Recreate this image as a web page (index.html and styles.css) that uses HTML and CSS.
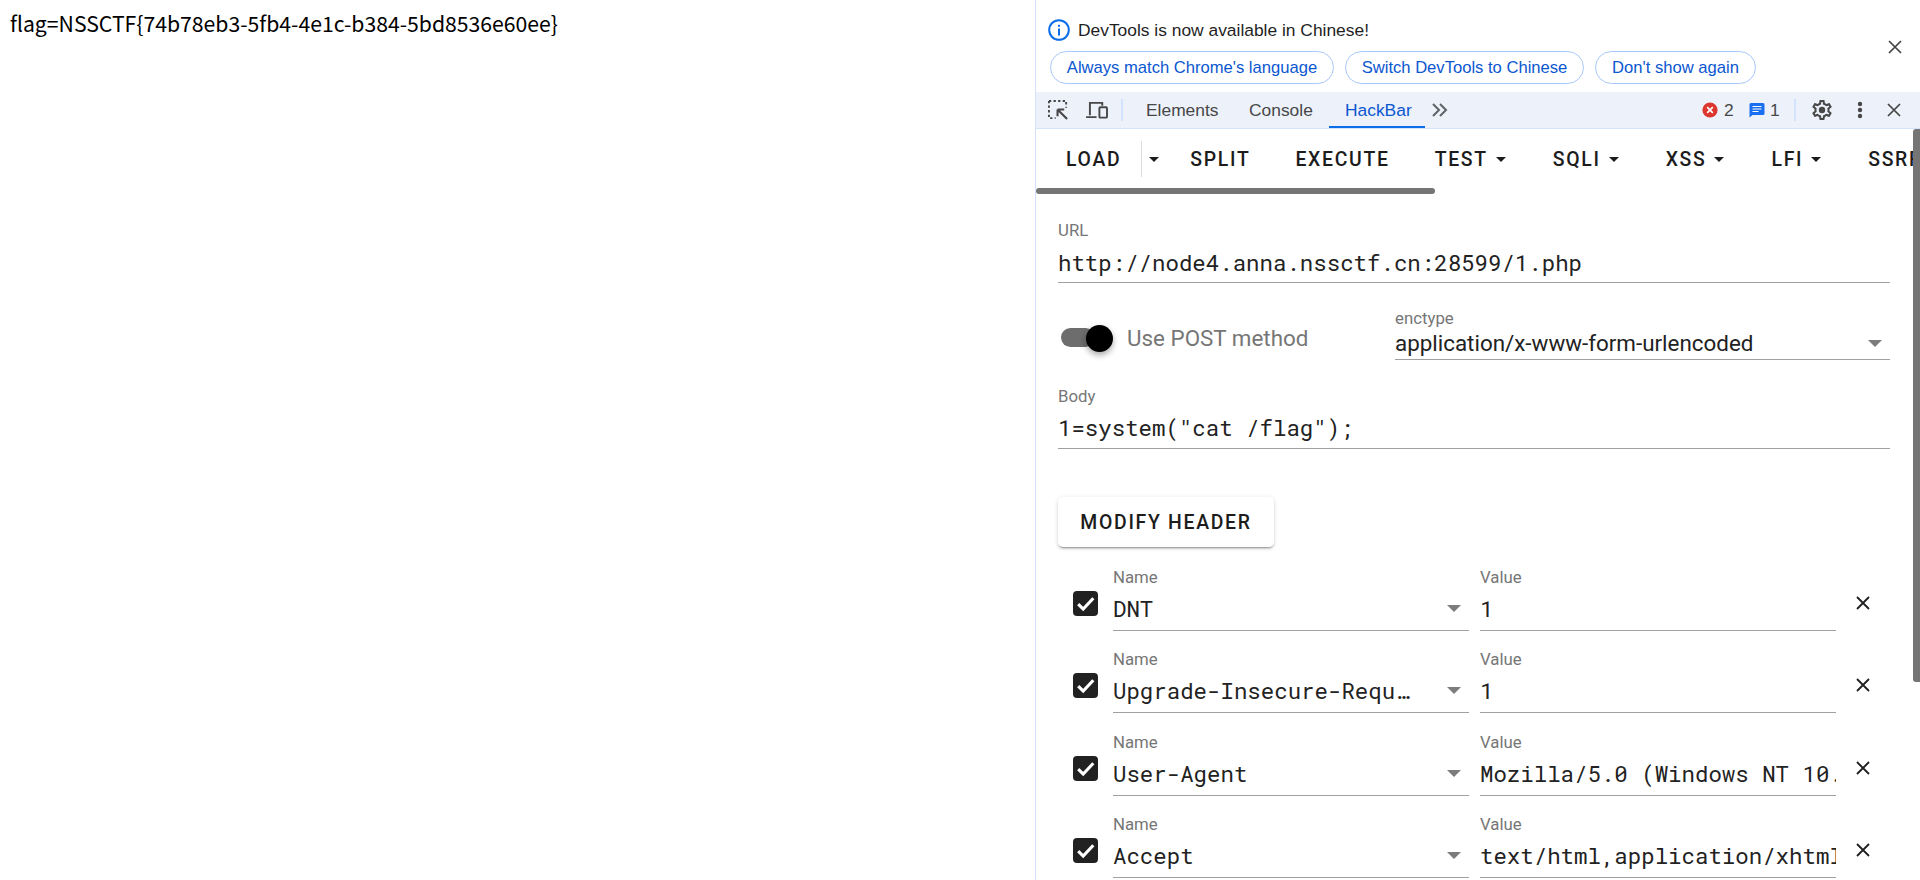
FILE: index.html
```html
<!DOCTYPE html>
<html lang="en">
<head>
<meta charset="utf-8">
<title>HackBar</title>
<link rel="stylesheet" href="styles.css">
</head>
<body>
<main class="page"><p class="flag">flag=NSSCTF{74b78eb3-5fb4-4e1c-b384-5bd8536e60ee}</p></main>
<aside class="devtools">
  <section class="infobar">
    <div class="info-line">
      <svg class="ico-info" viewBox="0 0 22 22"><circle cx="11" cy="11" r="9.8" fill="none" stroke="#0b6ee8" stroke-width="2"/><rect x="10" y="9.5" width="2" height="7" fill="#0b6ee8"/><rect x="10" y="5.8" width="2" height="2" fill="#0b6ee8"/></svg>
      <span>DevTools is now available in Chinese!</span>
    </div>
    <div class="info-actions">
      <button class="pill pill-a">Always match Chrome's language</button>
      <button class="pill pill-b">Switch DevTools to Chinese</button>
      <button class="pill pill-c">Don't show again</button>
    </div>
    <svg class="info-close" viewBox="0 0 14 14"><path d="M1 1l12 12M13 1L1 13" stroke="#444" stroke-width="1.7" fill="none"/></svg>
  </section>
  <nav class="tabs">
    <svg class="ti ti-inspect" viewBox="0 0 22 22"><path d="M1 1h18v7M1 1v18h7" fill="none" stroke="#474747" stroke-width="2" stroke-dasharray="2.4 2.4"/><path d="M10 10l10 10M10 10h7M10 10v7" fill="none" stroke="#474747" stroke-width="2.2"/></svg>
    <svg class="ti ti-device" viewBox="0 0 24 20"><path d="M4 15V2h13v3M0 17h11" fill="none" stroke="#474747" stroke-width="2"/><rect x="14" y="6.5" width="8" height="11" rx="1" fill="none" stroke="#474747" stroke-width="2"/></svg>
    <span class="sep sep-left"></span>
    <span class="tab tab-elements">Elements</span>
    <span class="tab tab-console">Console</span>
    <span class="tab tab-active">HackBar</span>
    <svg class="more" viewBox="0 0 18 14"><path d="M2 1l6 6-6 6M9 1l6 6-6 6" fill="none" stroke="#5f6368" stroke-width="2"/></svg>
    <span class="spacer"></span>
    <svg class="st-err" viewBox="0 0 16 16"><circle cx="8" cy="8" r="7.6" fill="#dc362e"/><path d="M5.2 5.2l5.6 5.6M10.8 5.2l-5.6 5.6" stroke="#fff" stroke-width="1.7"/></svg>
    <span class="count count-err">2</span>
    <svg class="st-msg" viewBox="0 0 16 16"><path d="M2 1h12a1.500 1.500 0 0 1 1.500 1.500v9A1.500 1.500 0 0 1 14 13H3.500L.5 15.500V2.500A1.500 1.500 0 0 1 2 1z" fill="#1a6ff0"/><path d="M3.500 4.500h9M3.500 7h9M3.500 9.500h6" stroke="#fff" stroke-width="1.200"/></svg>
    <span class="count count-msg">1</span>
    <span class="sep sep-right"></span>
    <svg class="ti-gear" viewBox="0 0 24 24"><path fill="#474747" d="M19.43 12.98c.04-.32.07-.64.07-.98 0-.34-.03-.66-.07-.98l2.11-1.65c.19-.15.24-.42.12-.64l-2-3.46c-.09-.16-.26-.25-.44-.25-.06 0-.12.01-.17.03l-2.49 1c-.52-.4-1.08-.73-1.69-.98l-.38-2.65C14.46 2.18 14.25 2 14 2h-4c-.25 0-.46.18-.49.42l-.38 2.65c-.61.25-1.17.59-1.69.98l-2.49-1c-.06-.02-.12-.03-.18-.03-.17 0-.34.09-.43.25l-2 3.46c-.13.22-.07.49.12.64l2.11 1.65c-.04.32-.07.65-.07.98 0 .33.03.66.07.98l-2.11 1.65c-.19.15-.24.42-.12.64l2 3.46c.09.16.26.25.44.25.06 0 .12-.01.17-.03l2.49-1c.52.4 1.08.73 1.69.98l.38 2.65c.03.24.24.42.49.42h4c.25 0 .46-.18.49-.42l.38-2.65c.61-.25 1.17-.59 1.69-.98l2.49 1c.06.02.12.03.18.03.17 0 .34-.09.43-.25l2-3.46c.12-.22.07-.49-.12-.64l-2.11-1.65zm-1.98-1.71c.04.31.05.52.05.73 0 .21-.02.43-.05.73l-.14 1.13.89.7 1.08.84-.7 1.21-1.27-.51-1.04-.42-.9.68c-.43.32-.84.56-1.25.73l-1.06.43-.16 1.13-.2 1.35h-1.4l-.19-1.35-.16-1.13-1.06-.43c-.43-.18-.83-.41-1.23-.71l-.91-.7-1.06.43-1.27.51-.7-1.21 1.08-.84.89-.7-.14-1.13c-.03-.31-.05-.54-.05-.74s.02-.43.05-.73l.14-1.13-.89-.7-1.08-.84.7-1.21 1.27.51 1.04.42.9-.68c.43-.32.84-.56 1.25-.73l1.06-.43.16-1.13.2-1.35h1.39l.19 1.35.16 1.13 1.06.43c.43.18.83.41 1.23.71l.91.7 1.06-.43 1.27-.51.7 1.21-1.07.85-.89.7.14 1.13z"/><circle cx="12" cy="12" r="3.200" fill="#474747"/></svg>
    <svg class="ti-dots" viewBox="0 0 6 18"><circle cx="3" cy="3" r="2.200" fill="#474747"/><circle cx="3" cy="9" r="2.200" fill="#474747"/><circle cx="3" cy="15" r="2.200" fill="#474747"/></svg>
    <svg class="ti-close" viewBox="0 0 14 14"><path d="M1 1l12 12M13 1L1 13" stroke="#444" stroke-width="1.700" fill="none"/></svg>
  </nav>
  <div class="hackbar">
    <div class="toolbar">
      <button class="tbtn">LOAD</button>
      <span class="tdiv"></span>
      <span class="caret caret-load"></span>
      <button class="tbtn">SPLIT</button>
      <button class="tbtn">EXECUTE</button>
      <button class="tbtn">TEST<span class="caret"></span></button>
      <button class="tbtn">SQLI<span class="caret"></span></button>
      <button class="tbtn">XSS<span class="caret"></span></button>
      <button class="tbtn">LFI<span class="caret"></span></button>
      <button class="tbtn">SSRF</button>
    </div>
    <div class="hthumb"></div>
    <form class="form">
      <div class="field field-url">
        <label class="lbl">URL</label>
        <div class="val mono">http://node4.anna.nssctf.cn:28599/1.php</div>
      </div>
      <div class="post-row">
        <div class="switch"><span class="track"></span><span class="knob"></span></div>
        <span class="post-label">Use POST method</span>
        <div class="field field-enc">
          <label class="lbl">enctype</label>
          <div class="val enc">application/x-www-form-urlencoded<span class="arrow"></span></div>
        </div>
      </div>
      <div class="field field-body">
        <label class="lbl">Body</label>
        <div class="val mono">1=system("cat /flag");</div>
      </div>
      <button type="button" class="modify">MODIFY HEADER</button>
      <div class="headers">
        <div class="hrow">
          <span class="cb"><svg viewBox="0 0 24 24"><path d="M5 12.500l4.800 4.800L19.500 7" fill="none" stroke="#fff" stroke-width="3"/></svg></span>
          <div class="field"><label class="lbl">Name</label><div class="val mono sel"><span class="clip">DNT</span><span class="arrow"></span></div></div>
          <div class="field"><label class="lbl">Value</label><div class="val mono"><span class="clip-raw">1</span></div></div>
          <svg class="del" viewBox="0 0 16 16"><path d="M2 2l12 12M14 2L2 14" stroke="#1f1f1f" stroke-width="1.800" fill="none"/></svg>
        </div>
        <div class="hrow">
          <span class="cb"><svg viewBox="0 0 24 24"><path d="M5 12.500l4.800 4.800L19.500 7" fill="none" stroke="#fff" stroke-width="3"/></svg></span>
          <div class="field"><label class="lbl">Name</label><div class="val mono sel"><span class="clip">Upgrade-Insecure-Requests</span><span class="arrow"></span></div></div>
          <div class="field"><label class="lbl">Value</label><div class="val mono"><span class="clip-raw">1</span></div></div>
          <svg class="del" viewBox="0 0 16 16"><path d="M2 2l12 12M14 2L2 14" stroke="#1f1f1f" stroke-width="1.800" fill="none"/></svg>
        </div>
        <div class="hrow">
          <span class="cb"><svg viewBox="0 0 24 24"><path d="M5 12.500l4.800 4.800L19.500 7" fill="none" stroke="#fff" stroke-width="3"/></svg></span>
          <div class="field"><label class="lbl">Name</label><div class="val mono sel"><span class="clip">User-Agent</span><span class="arrow"></span></div></div>
          <div class="field"><label class="lbl">Value</label><div class="val mono"><span class="clip-raw">Mozilla/5.0 (Windows NT 10.0; Win64; x64)</span></div></div>
          <svg class="del" viewBox="0 0 16 16"><path d="M2 2l12 12M14 2L2 14" stroke="#1f1f1f" stroke-width="1.800" fill="none"/></svg>
        </div>
        <div class="hrow">
          <span class="cb"><svg viewBox="0 0 24 24"><path d="M5 12.500l4.800 4.800L19.500 7" fill="none" stroke="#fff" stroke-width="3"/></svg></span>
          <div class="field"><label class="lbl">Name</label><div class="val mono sel"><span class="clip">Accept</span><span class="arrow"></span></div></div>
          <div class="field"><label class="lbl">Value</label><div class="val mono"><span class="clip-raw">text/html,application/xhtml+xml,application/xml</span></div></div>
          <svg class="del" viewBox="0 0 16 16"><path d="M2 2l12 12M14 2L2 14" stroke="#1f1f1f" stroke-width="1.800" fill="none"/></svg>
        </div>
      </div>
    </form>
    <div class="vthumb"></div>
  </div>
</aside>
</body>
</html>
```
FILE: styles.css
```css
* { box-sizing: border-box; }
html, body { margin: 0; height: 880px; overflow: hidden; background: #fff; }
body { display: flex; font-family: Roboto, "Liberation Sans", sans-serif; color: #1f1f1f; }
button { font: inherit; background: none; border: 0; padding: 0; color: inherit; }

.page { width: 1035px; flex: none; padding: 10px; }
.flag { margin: 0; font: 21.200px/26px "Noto Sans CJK SC", "Noto Sans", sans-serif; color: #000; }

.devtools { position: relative; width: 885px; flex: none; height: 880px; border-left: 1px solid #d3e3fd; display: flex; flex-direction: column; overflow: hidden; }

.infobar { position: relative; height: 92px; flex: none; padding: 18px 0 0 12px; font-family: "Liberation Sans", Arial, sans-serif; }
.info-line { display: flex; align-items: center; gap: 8px; height: 24px; font-size: 17.400px; color: #1f1f1f; }
.ico-info { width: 22px; height: 22px; flex: none; }
.info-actions { display: flex; gap: 11px; margin-top: 9px; padding-left: 2px; }
.pill { height: 33px; border: 1px solid #a8c7fa; border-radius: 17px; color: #0b57d0; font: 16.600px "Liberation Sans", Arial, sans-serif; background: #fff; padding: 0; }
.pill-a { width: 284px; }
.pill-b { width: 239px; }
.pill-c { width: 161px; }
.info-close { position: absolute; left: 852px; top: 40px; width: 14px; height: 14px; }

.tabs { height: 37px; flex: none; background: #ecf1fa; border-bottom: 1px solid #d3e3fd; display: flex; align-items: center; font: 17.400px "Liberation Sans", Arial, sans-serif; color: #474747; padding-left: 12px; }
.ti-inspect { width: 21px; height: 21px; flex: none; }
.ti-device { width: 23px; height: 19px; flex: none; margin-left: 17px; }
.sep { width: 2px; height: 22px; background: #d3e3fd; flex: none; }
.sep-left { margin-left: 12px; }
.tab { height: 36px; display: flex; align-items: center; flex: none; }
.tab-elements { margin-left: 23px; width: 103px; }
.tab-console { width: 80px; }
.tab-active { width: 96px; padding: 2px 0 0 16px; color: #0b57d0; border-bottom: 2px solid #0b6ee8; }
.more { width: 18px; height: 14px; margin-left: 6px; flex: none; }
.spacer { flex: 1; }
.st-err { width: 16px; height: 16px; flex: none; }
.count { margin-left: 6px; width: 21px; flex: none; }
.st-msg { width: 16px; height: 16px; flex: none; margin-left: 4px; }
.count-msg { margin-left: 5px; width: 18px; }
.sep-right { margin-left: 6px; }
.ti-gear { width: 24px; height: 24px; flex: none; margin-left: 14px; }
.ti-dots { width: 6px; height: 18px; flex: none; margin-left: 23px; }
.ti-close { width: 14px; height: 14px; flex: none; margin-left: 24px; margin-right: 19px; }

.hackbar { position: relative; flex: 1; overflow: hidden; }
.toolbar { display: flex; align-items: center; height: 60px; padding-left: 10px; gap: 5px; white-space: nowrap; overflow: hidden; }
.tbtn { flex: none; display: flex; align-items: center; height: 36px; padding: 0 20px; font-weight: 500; font-size: 19.400px; letter-spacing: 1.700px; color: #1c1c1c; }
.tdiv { width: 1px; height: 36px; background: #ddd; flex: none; margin-left: -5px; }
.caret { display: inline-block; width: 0; height: 0; border: 5px solid transparent; border-top-color: #1c1c1c; border-bottom: 0; margin: 0 2px 0 8px; }
.caret-load { margin: 0 6px 0 2px; flex: none; }
.hthumb { position: absolute; left: 0; top: 59px; width: 399px; height: 6px; border-radius: 3px; background: #757575; }
.vthumb { position: absolute; right: 0; top: 0; width: 7px; height: 553px; border-radius: 3px 0 0 3px; background: #757575; }

.form { padding: 32px 30px 0 22px; }
.field { display: flex; flex-direction: column; min-width: 0; }
.lbl { font-size: 16.800px; line-height: 18px; color: #767676; }
.val { position: relative; border-bottom: 1px solid #a0a0a0; color: #222; white-space: nowrap; }
.mono { font-family: "Roboto Mono", "DejaVu Sans Mono", monospace; font-size: 22.400px; letter-spacing: 0; }
.field-url .val { height: 44px; line-height: 47px; }
.post-row { display: flex; align-items: flex-start; margin-top: 26px; height: 78px; }
.switch { position: relative; width: 55px; height: 27px; margin: 14px 0 0 3px; flex: none; }
.track { position: absolute; left: 0; top: 5px; width: 34px; height: 19px; border-radius: 10px; background: #6d6d6d; }
.knob { position: absolute; left: 25px; top: 2px; width: 27px; height: 27px; border-radius: 50%; background: #000; box-shadow: 0 3px 6px rgba(0,0,0,.35); }
.post-label { font-size: 22.400px; line-height: 27px; color: #767676; margin: 16px 0 0 11px; width: 268px; flex: none; }
.field-enc { flex: 1; }
.val.enc { font-size: 22.400px; height: 33px; line-height: 32px; }
.arrow { position: absolute; width: 0; height: 0; border: 7px solid transparent; border-top-color: #7c7c7c; border-bottom: 0; right: 8px; top: 13px; }
.sel .arrow { top: 19px; }
.field-body .val { height: 44px; line-height: 46px; }
.modify { display: block; margin-top: 48px; width: 216px; height: 50px; background: #fff; border-radius: 5px; font-weight: 500; font-size: 19.400px; letter-spacing: 1.700px; color: #1c1c1c; box-shadow: 0 3px 1px -2px rgba(0,0,0,.2), 0 2px 2px 0 rgba(0,0,0,.14), 0 1px 5px 0 rgba(0,0,0,.12); }
.headers { margin-top: 21px; }
.hrow { display: grid; grid-template-columns: 29px 356px 356px auto; column-gap: 11px; height: 82.400px; padding-left: 15px; align-items: start; }
.cb { width: 25px; height: 25px; background: #212121; border-radius: 4px; margin-top: 23px; }
.cb svg { display: block; width: 25px; height: 25px; }
.hrow .val { height: 45px; line-height: 45px; overflow: hidden; }
.sel { padding-right: 56px; }
.clip { display: block; overflow: hidden; text-overflow: ellipsis; }
.clip-raw { display: block; overflow: hidden; }
.del { width: 16px; height: 16px; margin: 27px 0 0 8px; }
```
